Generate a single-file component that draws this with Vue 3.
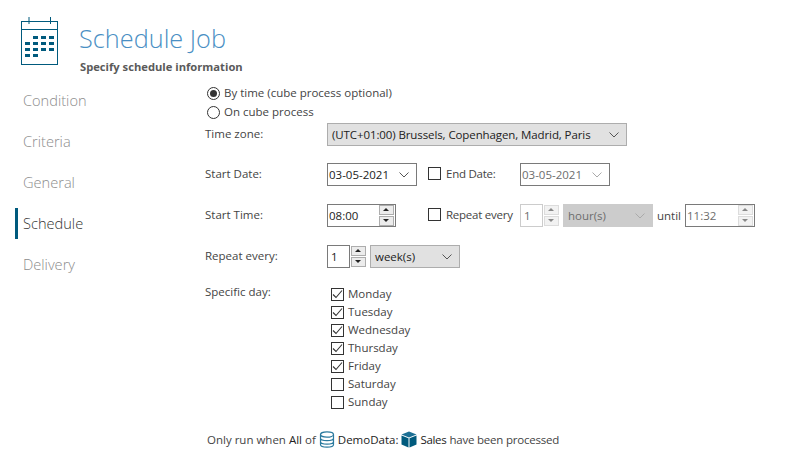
<template>
  <div class="page">
    <!-- header -->
    <header class="head">
      <svg class="cal" width="38" height="48" viewBox="0 0 38 48">
        <g fill="none" stroke="#005a7d" stroke-width="1">
          <rect x="0.5" y="4.5" width="36" height="43" />
          <path d="M0 12.500H37M8 0V7M29.500 0V7" />
        </g>
        <g fill="#005a7d">
          <rect v-for="(c, i) in calCells" :key="i" :x="c[0]" :y="c[1]" width="5" height="3" />
        </g>
      </svg>
      <div class="head-text">
        <h1 class="title">Schedule Job</h1>
        <div class="sub">Specify schedule information</div>
      </div>
    </header>

    <div class="body">
      <!-- steps -->
      <nav class="nav">
        <div v-for="s in steps" :key="s" class="step" :class="{ active: s === 'Schedule' }">{{ s }}</div>
      </nav>

      <main class="form">
        <label class="opt"><span class="radio on"></span><span class="up-text">By time (cube process optional)</span></label>
        <label class="opt"><span class="radio"></span><span class="up-text">On cube process</span></label>

        <div class="row first">
          <span class="lbl">Time zone:</span>
          <div class="sel grey zone"><span class="tight">(UTC+01:00) Brussels, Copenhagen, Madrid, Paris</span><svg class="chev" width="10" height="6" viewBox="0 0 10 6"><path d="M.5.5 5 5l4.500-4.500" fill="none" stroke="#555" /></svg></div>
        </div>

        <div class="row">
          <span class="lbl">Start Date:</span>
          <div class="sel date">03-05-2021<svg class="chev" width="10" height="6" viewBox="0 0 10 6"><path d="M.5.5 5 5l4.500-4.500" fill="none" stroke="#555" /></svg></div>
          <span class="box after"></span>
          <span class="side-lbl">End Date:</span>
          <div class="sel date off">03-05-2021<svg class="chev" width="10" height="6" viewBox="0 0 10 6"><path d="M.5.5 5 5l4.500-4.500" fill="none" stroke="#aaa" /></svg></div>
        </div>

        <div class="row">
          <span class="lbl">Start Time:</span>
          <div class="spin time">08:00
            <div class="arrows"><span class="up"></span><span class="down"></span></div>
          </div>
          <span class="box after2"></span>
          <span class="side-lbl">Repeat every</span>
          <div class="num off-num">1</div>
          <div class="arrows solo dim"><span class="up"></span><span class="down"></span></div>
          <div class="sel hour">hour(s)<svg class="chev" width="10" height="6" viewBox="0 0 10 6"><path d="M.5.5 5 5l4.500-4.500" fill="none" stroke="#aaa" /></svg></div>
          <span class="until">until</span>
          <div class="spin until-time off-time">11:32
            <div class="arrows dim"><span class="up"></span><span class="down"></span></div>
          </div>
        </div>

        <div class="row">
          <span class="lbl">Repeat every:</span>
          <div class="num">1</div>
          <div class="arrows solo"><span class="up"></span><span class="down"></span></div>
          <div class="sel grey week">week(s)<svg class="chev" width="10" height="6" viewBox="0 0 10 6"><path d="M.5.5 5 5l4.500-4.500" fill="none" stroke="#555" /></svg></div>
        </div>

        <div class="days-row">
          <span class="lbl day-lbl">Specific day:</span>
          <div class="days">
            <label v-for="d in days" :key="d.name" class="day">
              <span class="box">
                <svg v-if="d.on" width="11" height="11" viewBox="0 0 11 11"><path d="M1 5.500 4 8.500 10 1.500" fill="none" stroke="#333" stroke-width="1.100" /></svg>
              </span><span class="up-text">{{ d.name }}</span>
            </label>
          </div>
        </div>

        <div class="foot">
          <span>Only run when</span>
          <span class="dark">All</span>
          <span>of</span>
          <svg width="16" height="17" viewBox="0 0 16 17">
            <g fill="none" stroke="#2b7a9e" stroke-width="1.200">
              <ellipse cx="8" cy="3.500" rx="6.500" ry="2.700" />
              <path d="M1.500 3.500v10c0 1.500 3 2.700 6.500 2.700s6.500-1.200 6.500-2.700v-10M1.500 7c0 1.500 3 2.700 6.500 2.700s6.500-1.200 6.500-2.700M1.500 10.500c0 1.500 3 2.700 6.500 2.700s6.500-1.200 6.500-2.700" />
            </g>
          </svg>
          <span class="dark">DemoData:</span>
          <svg width="16" height="17" viewBox="0 0 16 17">
            <path d="M8 .5 15.500 3.500 8 6.500.5 3.500Z" fill="#1c6f94" />
            <path d="M.5 4.500 7.500 7.300V16.500L.5 13.500ZM15.500 4.500 8.500 7.300V16.500L15.500 13.500Z" fill="#005a7d" />
          </svg>
          <span class="dark sales">Sales</span>
          <span class="tight2">have been processed</span>
        </div>
      </main>
    </div>
  </div>
</template>

<script setup>
const steps = ['Condition', 'Criteria', 'General', 'Schedule', 'Delivery']

const days = [
  { name: 'Monday', on: true },
  { name: 'Tuesday', on: true },
  { name: 'Wednesday', on: true },
  { name: 'Thursday', on: true },
  { name: 'Friday', on: true },
  { name: 'Saturday', on: false },
  { name: 'Sunday', on: false }
]

// calendar squares: x, y
const calCells = [
  [12, 19], [20, 19], [28, 19],
  [4, 25], [12, 25], [20, 25], [28, 25],
  [4, 31], [12, 31], [20, 31], [28, 31],
  [4, 37], [12, 37]
]
</script>

<style>
html, body {
  margin: 0;
  background: #fff;
}
</style>

<style scoped>
.page {
  width: 800px;
  height: 472px;
  overflow: hidden;
  font-family: "Open Sans", "Noto Sans", sans-serif;
  font-size: 11.500px;
  color: #444;
}

.head {
  display: flex;
  height: 63px;
  padding: 17px 0 0 21px;
}

.cal {
  display: block;
  flex: none;
}

.head-text {
  margin-left: 20px;
  padding-top: 4px;
}

.title {
  margin: 0;
  font-size: 25.300px;
  font-weight: 300;
  line-height: 34px;
  color: #4a8fc4;
}

.sub {
  margin-top: 4px;
  margin-left: 1px;
  font-size: 11.200px;
  font-weight: 700;
  line-height: 16px;
  color: #5a5a5a;
}

.body {
  display: flex;
}

.nav {
  width: 190px;
  margin-left: 15px;
  padding-top: 5px;
  flex: none;
}

.step {
  height: 31px;
  margin-bottom: 10px;
  padding-left: 5px;
  border-left: 3px solid transparent;
  font-size: 14.600px;
  font-weight: 300;
  line-height: 31px;
  color: #8c8c8c;
}

.step.active {
  border-left-color: #005a7d;
  color: #333;
}

.form {
  flex: 1;
  padding-top: 4px;
}

.opt {
  display: flex;
  align-items: center;
  height: 19px;
  padding-left: 2px;
}

.up-text {
  margin-top: -2px;
}

.radio {
  position: relative;
  box-sizing: border-box;
  width: 13px;
  height: 13px;
  margin-right: 4px;
  border: 1px solid #333;
  border-radius: 50%;
}

.radio.on::after {
  content: "";
  position: absolute;
  inset: 2px;
  border-radius: 50%;
  background: #333;
}

.row {
  display: flex;
  align-items: center;
  height: 23px;
  margin-top: 18px;
}

.row.first {
  margin-top: 1px;
  margin-bottom: -1px;
}

.lbl {
  flex: none;
  width: 122px;
  margin-top: -3px;
}

.sel {
  display: flex;
  align-items: center;
  justify-content: space-between;
  box-sizing: border-box;
  height: 23px;
  padding: 0 7px 0 4px;
  border: 1px solid #7a7a7a;
  flex: none;
  color: #222;
}

.sel.grey {
  border-color: #adadad;
  background: #e1e1e1;
}

.tight {
  letter-spacing: -0.1px;
}

.tight2 {
  letter-spacing: -0.22px;
}

.zone {
  width: 300px;
}

.date {
  width: 90px;
  padding-left: 1px;
}

.date.off {
  border-color: #7a7a7a;
  color: #6d6d6d;
}

.hour {
  width: 90px;
  margin-left: 4px;
  border-color: #ccc;
  background: #ccc;
  color: #6d6d6d;
}

.week {
  width: 90px;
  margin-left: 4px;
}

.box {
  display: flex;
  align-items: center;
  justify-content: center;
  flex: none;
  box-sizing: border-box;
  width: 13px;
  height: 13px;
  border: 1px solid #333;
}

.box.after {
  margin: -3px 5px 0 11px;
}

.box.after2 {
  margin: -3px 5px 0 32px;
}

.side-lbl {
  flex: none;
  width: 74px;
  margin-top: -3px;
  letter-spacing: -0.25px;
}

.spin {
  display: flex;
  align-items: center;
  justify-content: space-between;
  box-sizing: border-box;
  height: 23px;
  padding: 0 1px 0 1px;
  border: 1px solid #7a7a7a;
  flex: none;
  color: #222;
}

.time {
  width: 69px;
}

.until-time {
  width: 70px;
}

.off-time {
  color: #6d6d6d;
}

.num {
  box-sizing: border-box;
  width: 23px;
  height: 23px;
  padding-left: 3px;
  border: 1px solid #7a7a7a;
  flex: none;
  line-height: 21px;
  color: #222;
}

.off-num {
  border-color: #ccc;
  color: #6d6d6d;
}

.arrows {
  display: flex;
  flex-direction: column;
  gap: 1px;
  flex: none;
  width: 15px;
}

.arrows.solo {
  margin-left: 1px;
}

.arrows span {
  position: relative;
  box-sizing: border-box;
  height: 10px;
  border: 1px solid #adadad;
  background: #ececec;
}

.arrows span::after {
  content: "";
  position: absolute;
  left: 3px;
  top: 2px;
  border-left: 3px solid transparent;
  border-right: 3px solid transparent;
}

.arrows .up::after {
  border-bottom: 3px solid #222;
}

.arrows .down::after {
  border-top: 3px solid #222;
}

.arrows.dim span {
  border-color: #dcdcdc;
  background: #f2f2f2;
}

.arrows.dim .up::after {
  border-bottom-color: #888;
}

.arrows.dim .down::after {
  border-top-color: #888;
}

.until {
  flex: none;
  width: 32px;
  padding-left: 4px;
  box-sizing: border-box;
}

.days-row {
  display: flex;
  margin-top: 17px;
}

.day-lbl {
  margin-top: 0;
  line-height: 13px;
  padding-top: 0;
}

.days {
  margin-left: 4px;
}

.day {
  display: flex;
  align-items: center;
  height: 18px;
}

.day .box {
  margin-right: 4px;
}

.foot {
  display: flex;
  align-items: center;
  gap: 3px;
  height: 17px;
  margin-top: 20px;
  padding-left: 2px;
}

.foot svg {
  flex: none;
}

.dark {
  color: #222;
}

.sales {
  letter-spacing: -0.3px;
}
</style>
